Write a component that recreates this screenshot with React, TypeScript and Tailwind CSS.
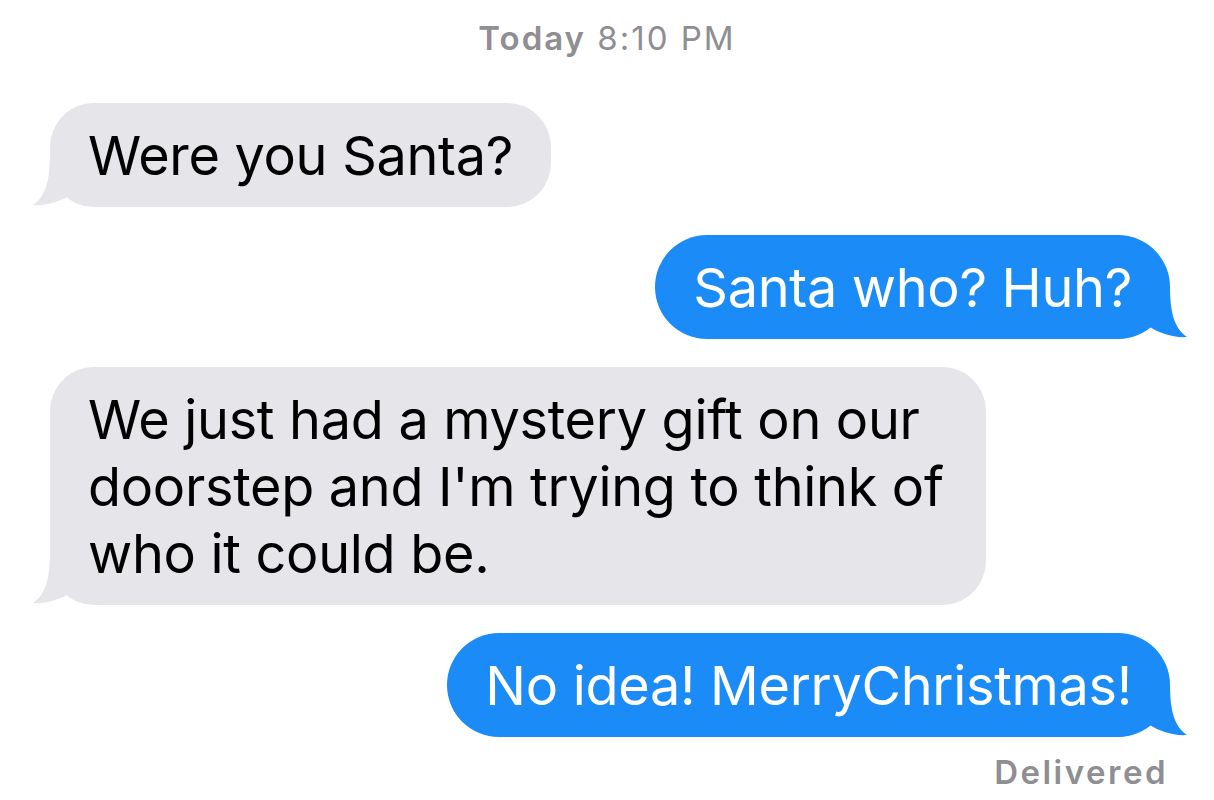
import React from 'react';

type Msg = { from: 'them' | 'me'; text: string };

const messages: Msg[] = [
  { from: 'them', text: 'Were you Santa?' },
  { from: 'me', text: 'Santa who? Huh?' },
  {
    from: 'them',
    text: "We just had a mystery gift on our doorstep and I'm trying to think of who it could be.",
  },
  { from: 'me', text: 'No idea! MerryChristmas!' },
];

// iMessage tail, drawn for the left side; mirrored for blue bubbles
function Tail({ color, right }: { color: string; right?: boolean }) {
  return (
    <svg
      width="70"
      height="57"
      viewBox="0 0 70 57"
      className={
        right
          ? 'absolute bottom-0 right-[-17px] -scale-x-100'
          : 'absolute bottom-0 left-[-17px]'
      }
    >
      <path
        d="M17 4 C17 30 13 46 0 55 C14 56 28 51 37 45 C46 52 56 56 70 57 L70 4 Z"
        fill={color}
      />
    </svg>
  );
}

function Bubble({ msg }: { msg: Msg }) {
  const mine = msg.from === 'me';
  const color = mine ? '#1b8bf7' : '#e5e5ea';
  return (
    <div className={mine ? 'flex justify-end pr-[44px]' : 'flex justify-start pl-[50px]'}>
      <div
        className={
          mine
            ? 'relative max-w-[936px] rounded-[52px] bg-[#1b8bf7] px-[38px] py-[18.5px] text-white'
            : 'relative max-w-[936px] rounded-[44px] bg-[#e5e5ea] px-[38px] py-[18.5px] text-black'
        }
      >
        <Tail color={color} right={mine} />
        <p className="relative text-[54px] leading-[67px] tracking-[-0.3px]">{msg.text}</p>
      </div>
    </div>
  );
}

export default function App() {
  return (
    <div
      className="min-h-[800px] w-[1214px] bg-white"
      style={{ fontFamily: 'Inter, "Liberation Sans", sans-serif' }}
    >
      <div className="pt-[17px] text-center text-[33px] leading-[42px] tracking-[2px] text-[#8e8e93]">
        <span className="font-semibold">Today</span> 8:10 PM
      </div>
      <div className="mt-[44px] flex flex-col gap-[28px]">
        {messages.map((m, i) => (
          <Bubble key={i} msg={m} />
        ))}
      </div>
      <div className="mt-[14px] pr-[46px] text-right text-[33px] font-semibold leading-[42px] tracking-[2.5px] text-[#8e8e93]">
        Delivered
      </div>
    </div>
  );
}
